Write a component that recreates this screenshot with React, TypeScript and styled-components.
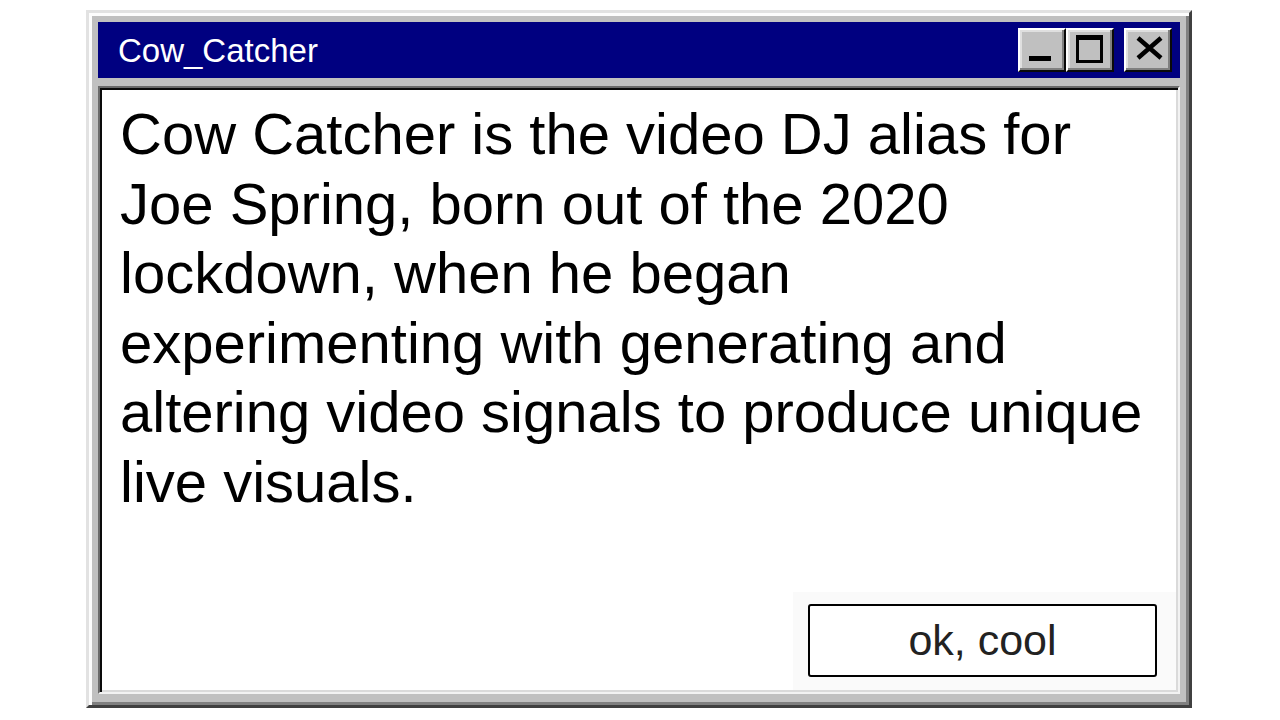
import React from "react";
import styled, { createGlobalStyle } from "styled-components";

const Global = createGlobalStyle`
  html, body { margin: 0; padding: 0; background: #ffffff; }
  body { font-family: "Liberation Sans", Arial, sans-serif; }
`;

const Page = styled.div`
  width: 1280px;
  height: 720px;
  box-sizing: border-box;
  padding: 10px 88px 12px 86px;
  display: flex;
`;

const Window = styled.div`
  flex: 1;
  display: flex;
  flex-direction: column;
  gap: 8px;
  background: #c0c0c0;
  border-style: solid;
  border-width: 3px;
  border-color: #e2e2e2 #404040 #404040 #e2e2e2;
  box-shadow: inset 3px 3px #fdfdfd, inset -3px -3px #808080;
  padding: 9px 9px 11px 9px;
`;

const TitleBar = styled.div`
  height: 56px;
  flex: none;
  background: #000080;
  display: flex;
  align-items: center;
  justify-content: space-between;
  padding: 0 8px 0 20px;
`;

const Title = styled.span`
  color: #ffffff;
  font-size: 33px;
  line-height: 1;
`;

const Controls = styled.div`
  display: flex;
  align-items: center;
`;

const CtrlButton = styled.button<{ $gap?: boolean }>`
  width: 48px;
  height: 44px;
  box-sizing: border-box;
  padding: 0;
  margin-left: ${(p) => (p.$gap ? "10px" : "0")};
  background: #c0c0c0;
  border-style: solid;
  border-width: 2px;
  border-color: #ffffff #0a0a0a #0a0a0a #ffffff;
  box-shadow: inset -2px -2px #808080, inset 2px 2px #dfdfdf;
  display: flex;
  align-items: center;
  justify-content: center;
`;

const Content = styled.div`
  flex: 1;
  display: flex;
  flex-direction: column;
  background: #ffffff;
  border-style: solid;
  border-width: 2px;
  border-color: #6a6a6a #f2f2f2 #f2f2f2 #6a6a6a;
  box-shadow: inset 2px 2px #0a0a0a, inset -2px -2px #dadada;
`;

const Message = styled.p`
  margin: 0;
  padding: 11px 14px 0 20px;
  font-size: 58px;
  line-height: 69.5px;
  color: #000000;
`;

const Footer = styled.div`
  margin-top: auto;
  align-self: flex-end;
  background: #fafafa;
  padding: 12px 19px 13px 15px;
  margin: auto 2px 2px 0;
`;

const OkButton = styled.button`
  width: 349px;
  height: 73px;
  box-sizing: border-box;
  border: 2px solid #000000;
  border-radius: 3px;
  background: #ffffff;
  color: #222222;
  font-family: "Liberation Sans", Arial, sans-serif;
  font-size: 43px;
  padding: 0;
  display: flex;
  align-items: center;
  justify-content: center;
`;

const MinIcon = () => (
  <svg width="44" height="40" viewBox="0 0 44 40">
    <rect x="9" y="26" width="22" height="5" fill="#000" />
  </svg>
);

const MaxIcon = () => (
  <svg width="44" height="40" viewBox="0 0 44 40">
    <path d="M8 5h27v28H8z M11 10v20h21V10z" fill="#000" fillRule="evenodd" />
  </svg>
);

const CloseIcon = () => (
  <svg width="44" height="40" viewBox="0 0 44 40">
    <path d="M12 8L35 28M35 8L12 28" stroke="#000" strokeWidth="4.5" />
  </svg>
);

export default function App() {
  return (
    <>
      <Global />
      <Page>
        <Window>
          <TitleBar>
            <Title>Cow_Catcher</Title>
            <Controls>
              <CtrlButton aria-label="minimize">
                <MinIcon />
              </CtrlButton>
              <CtrlButton aria-label="maximize">
                <MaxIcon />
              </CtrlButton>
              <CtrlButton $gap aria-label="close">
                <CloseIcon />
              </CtrlButton>
            </Controls>
          </TitleBar>
          <Content>
            <Message>
              Cow Catcher is the video DJ alias for Joe Spring, born out of the 2020 lockdown, when he began
              experimenting with generating and altering video signals to produce unique live visuals.
            </Message>
            <Footer>
              <OkButton>ok, cool</OkButton>
            </Footer>
          </Content>
        </Window>
      </Page>
    </>
  );
}
